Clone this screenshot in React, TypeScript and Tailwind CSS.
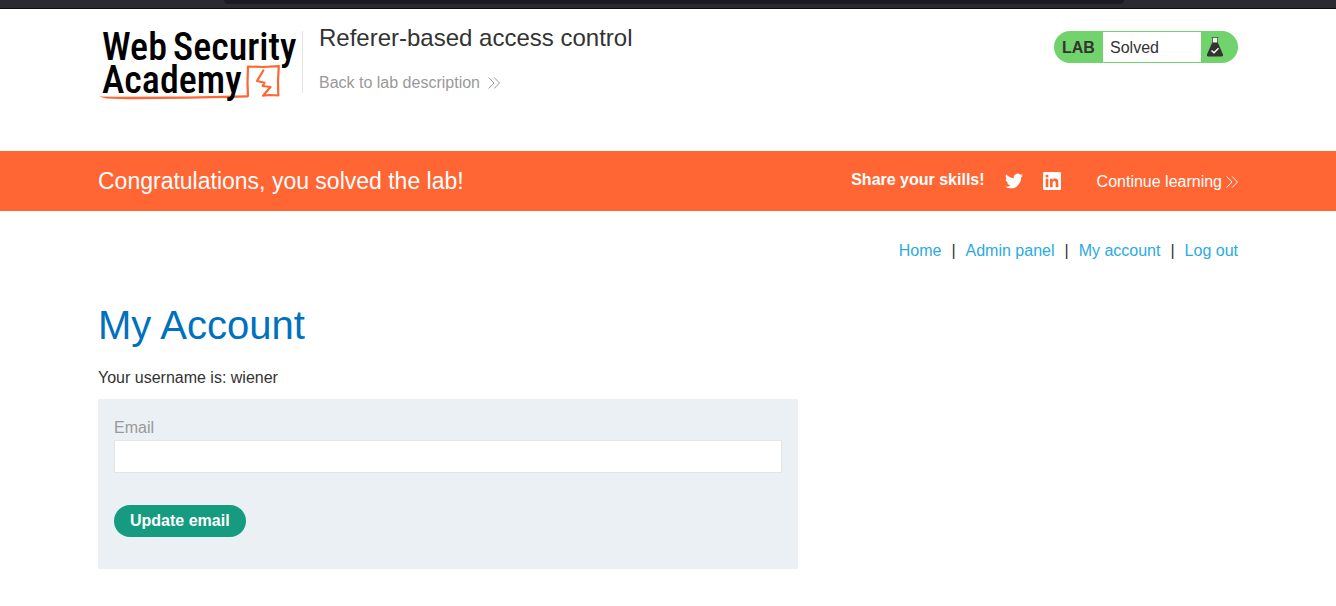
import React from "react";

const links = ["Home", "Admin panel", "My account", "Log out"];

function Chevrons() {
  return (
    <svg className="h-3 w-3" viewBox="0 0 12 12" fill="none" stroke="currentColor" aria-hidden="true">
      <path d="M0.7 0.5 6 6 0.7 11.5M6.2 0.5 11.5 6 6.2 11.5" />
    </svg>
  );
}

function Logo() {
  return (
    <a href="#" aria-label="Web Security Academy" className="shrink-0">
      <svg className="h-[88px] w-[204px]" viewBox="0 -8 204 88" aria-hidden="true">
        <g fill="none" stroke="#ff6633" strokeLinejoin="round" strokeLinecap="round">
          <path fill="#ff6633" stroke="none" d="M1 69.600 20 69.800 90 69.600 150 68.200 150 70.400 90 71.800 30 72.200 8 71.500Z" />
          <path strokeWidth="2.200" d="M150 69 149.500 56 150 39.500 165 40 180.800 39.200 180 54 180.300 68.500 172 68 165 68.700 172.500 60 164.700 59 166.500 55.700 159 54 165.300 43.500" />
        </g>
        <g className="fill-black font-['Roboto_Condensed',Roboto,sans-serif] text-[38px] font-medium">
          <text x="4" y="33">Web</text>
          <text x="75" y="33">Security</text>
          <text x="4" y="66">Academy</text>
        </g>
      </svg>
    </a>
  );
}

function Flask() {
  return (
    <svg className="h-5 w-4" viewBox="0 0 16 20" aria-hidden="true">
      <path fill="#e6f7e5" d="M6 1h4v5H6z" />
      <path fill="none" stroke="#555" strokeWidth="0.8" d="M4.5 .5h7M5.5 .5V6M10.500 .5V6" />
      <path fill="#333332" d="M5.200 5.500h5.600L16 17.500q.5 2-1.500 2h-13q-2 0-1.500-2Z" />
      <path fill="none" stroke="#fff" strokeWidth="1.400" d="m4.500 13.500 2.500 2.300 4.500-4.500" />
    </svg>
  );
}

export default function App() {
  return (
    <div className="min-h-screen bg-white font-['Liberation_Sans',Arial,sans-serif] text-base text-[#333332]">
      <div className="h-[9px] border-b border-[#0c0c0d] bg-[#2b2a33] pl-3">
        <div className="mx-auto h-1 w-[68%] rounded-b bg-[#1c1b22]" />
      </div>

      <header className="mx-auto flex w-full max-w-[1140px] items-start pt-[10px] pb-11">
        <Logo />
        <div className="mt-3 h-[62px] w-px bg-[#e4e4e4]" />
        <div className="flex grow flex-col gap-5 pt-[7px] pl-4">
          <h2 className="text-2xl leading-6">Referer-based access control</h2>
          <a href="#" className="flex items-center gap-2 pt-px text-[#999]">
            Back to lab description <Chevrons />
          </a>
        </div>
        <div className="mt-3 flex h-8 w-[184px] items-stretch overflow-hidden rounded-full bg-[#71d36b]">
          <span className="w-[49px] pt-[5px] pl-2 font-bold">LAB</span>
          <p className="my-px grow bg-white pt-1 pl-[7px] leading-6">Solved</p>
          <span className="flex w-[37px] items-center pl-1.5">
            <Flask />
          </span>
        </div>
      </header>

      <section className="bg-[#ff6633] text-white">
        <div className="mx-auto flex h-[60px] w-full max-w-[1140px] items-center">
          <h4 className="grow text-[23px]">Congratulations, you solved the lab!</h4>
          <span className="mr-5 pb-[2px] font-bold">Share your skills!</span>
          <a href="#" aria-label="Twitter" className="mr-5">
            <svg className="h-[18px] w-[18px]" viewBox="0 0 24 20" fill="currentColor" aria-hidden="true">
              <path d="M23.950 2.570a10 10 0 0 1-2.820.78 4.960 4.960 0 0 0 2.160-2.730c-.95.560-2 .960-3.130 1.190a4.920 4.920 0 0 0-8.380 4.480C7.690 6.100 4.070 4.130 1.640 1.160a4.820 4.820 0 0 0-.67 2.480c0 1.710.87 3.210 2.190 4.100a4.900 4.900 0 0 1-2.230-.62v.06a4.920 4.920 0 0 0 3.950 4.830 5 5 0 0 1-2.210.08 4.940 4.940 0 0 0 4.600 3.420A9.870 9.870 0 0 1 0 17.540a14 14 0 0 0 7.550 2.210c9.050 0 14-7.500 14-13.980 0-.21 0-.42-.02-.63a9.940 9.940 0 0 0 2.420-2.570Z" />
            </svg>
          </a>
          <a href="#" aria-label="LinkedIn" className="mr-9">
            <svg className="h-[18px] w-[18px]" viewBox="0 0 24 24" fill="currentColor" aria-hidden="true">
              <path d="M20.450 20.450h-3.560v-5.570c0-1.330-.03-3.040-1.850-3.040-1.850 0-2.140 1.450-2.140 2.940v5.670H9.350V9h3.410v1.560h.05c.48-.9 1.640-1.850 3.370-1.850 3.600 0 4.270 2.370 4.270 5.460v6.280ZM5.340 7.430a2.060 2.060 0 1 1 0-4.130 2.060 2.060 0 0 1 0 4.130Zm1.780 13.020H3.560V9h3.560v11.450ZM22.220 0H1.770C.79 0 0 .77 0 1.730v20.540C0 23.230.79 24 1.770 24h20.450c.98 0 1.780-.77 1.780-1.730V1.730C24 .77 23.200 0 22.220 0Z" />
            </svg>
          </a>
          <a href="#" className="flex items-center gap-1 pt-[2px]">
            Continue learning <Chevrons />
          </a>
        </div>
      </section>

      <main className="mx-auto w-full max-w-[1140px]">
        <nav className="flex justify-end gap-[10px] pt-7">
          {links.map((link, i) => (
            <React.Fragment key={link}>
              {i > 0 && <span>|</span>}
              <a href="#" className="text-[#29abe2]">{link}</a>
            </React.Fragment>
          ))}
        </nav>
        <h1 className="pt-[34px] text-[40px] leading-[56px] text-[#0071bc]">My Account</h1>
        <p className="pt-[13px]">Your username is: wiener</p>
        <form className="mt-[9px] max-w-[700px] bg-[#eaf0f3] p-4 pb-8" onSubmit={(e) => e.preventDefault()}>
          <label htmlFor="email" className="block leading-[25px] text-[#999]">Email</label>
          <input id="email" type="email" className="mb-8 block h-[33px] w-full border border-[#e4e4e4] bg-white px-2 outline-none" />
          <button type="submit" className="h-8 rounded-full bg-[#159b80] px-4 pb-px font-bold text-white">
            Update email
          </button>
        </form>
      </main>
    </div>
  );
}
